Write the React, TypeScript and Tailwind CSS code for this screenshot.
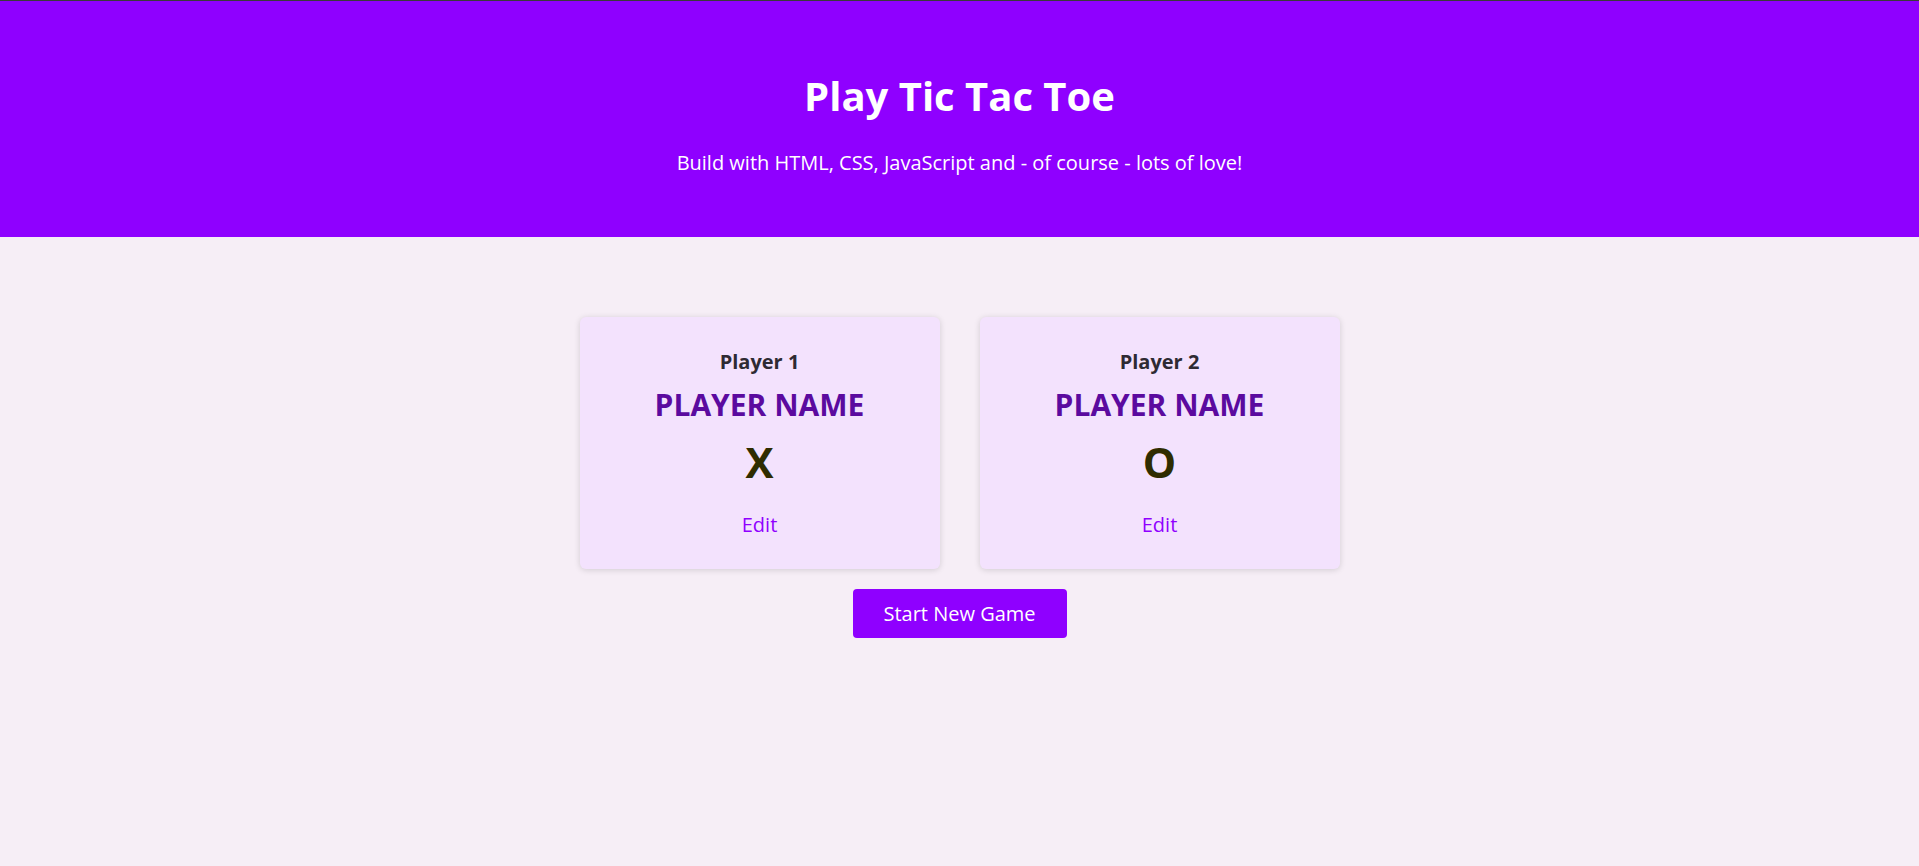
import React from "react";

function PlayerCard({ label, symbol }: { label: string; symbol: string }) {
  return (
    <li className="w-[360px] h-[252px] bg-[#f3e2fd] rounded-[6px] shadow-[0_1px_6px_rgba(0,0,0,0.15)] flex flex-col items-center pt-[30px]">
      <h2 className="text-[20px] leading-[30px] font-bold text-[#2e2a33]">{label}</h2>
      <h3 className="mt-[8px] text-[30px] leading-[40px] font-bold text-[#5b0a9f] uppercase">PLAYER NAME</h3>
      <p className="mt-[10px] text-[42px] leading-[54px] font-bold text-[#2f2c00]">{symbol}</p>
      <button className="mt-[22px] text-[20px] leading-[28px] text-[#9000ff]">Edit</button>
    </li>
  );
}

export default function App() {
  return (
    <div className="min-h-[866px] bg-[#f6eef6] font-['Open_Sans',sans-serif]">
      <header className="h-[237px] bg-[#8f00ff] border-t border-[#3a3a3a] flex flex-col items-center pt-[67px]">
        <h1 className="text-[40px] leading-[56px] font-bold text-white">Play Tic Tac Toe</h1>
        <p className="mt-[25px] text-[20px] leading-[28px] text-white">Build with HTML, CSS, JavaScript and - of course - lots of love!</p>
      </header>
      <main className="flex flex-col items-center pt-[80px]">
        <ol className="flex gap-[40px]">
          <PlayerCard label="Player 1" symbol="X" />
          <PlayerCard label="Player 2" symbol="O" />
        </ol>
        <button className="mt-[20px] w-[214px] h-[49px] rounded-[4px] bg-[#8f00ff] text-white text-[20px]">Start New Game</button>
      </main>
    </div>
  );
}
